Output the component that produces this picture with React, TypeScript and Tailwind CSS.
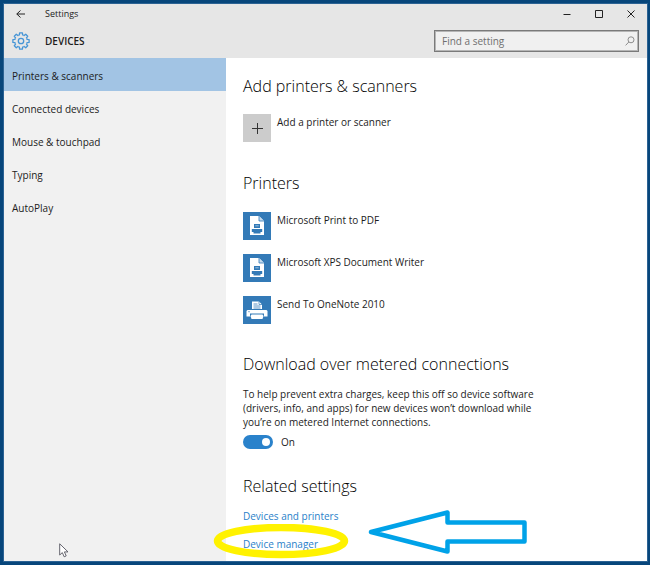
import { useState } from 'react'

const NAV_ITEMS = ['Printers & scanners', 'Connected devices', 'Mouse & touchpad', 'Typing', 'AutoPlay']

const PRINTERS = [
  { name: 'Microsoft Print to PDF', kind: 'document' },
  { name: 'Microsoft XPS Document Writer', kind: 'document' },
  { name: 'Send To OneNote 2010', kind: 'printer' },
]

function GearIcon() {
  const teeth = [0, 45, 90, 135, 180, 225, 270, 315]
  return (
    <svg viewBox="0 0 18 18" className="size-[18px]" fill="none" stroke="#4795d6" strokeWidth="1.3" strokeLinejoin="round" aria-hidden="true">
      <circle cx="9" cy="9" r="2.7" />
      {teeth.map((deg) => (
        <path
          key={deg}
          transform={`rotate(${deg} 9 9)`}
          d="M6.6 3.2 L7.4 2.9 L7.6 .9 H10.4 L10.6 2.9 L11.4 3.2"
        />
      ))}
    </svg>
  )
}

function DocumentPrinterIcon() {
  return (
    <svg viewBox="0 0 28 28" className="size-7" aria-hidden="true">
      <path d="M7 4 H16 L21 9 V23 H7 Z" fill="#fff" />
      <path d="M16 4 V9 H21" fill="#c4dbee" stroke="#337ab7" strokeWidth=".8" />
      <path d="M11 12 H17 V16 H11 Z" fill="#337ab7" />
      <path d="M12.3 13.8 H15.7" stroke="#b9d3ea" strokeWidth=".8" />
      <path d="M8.800 17 H19.200 V20 H8.800 Z" fill="#337ab7" />
      <path d="M10.500 19.500 H17.500 V21.500 H10.500 Z" fill="#337ab7" />
    </svg>
  )
}

function PrinterIcon() {
  return (
    <svg viewBox="0 0 28 28" className="size-7" aria-hidden="true">
      <path d="M9 5.5 H16 L19 8.5 V13 H9 Z" fill="#fff" />
      <path d="M16 5.5 V8.5 H19" fill="none" stroke="#337ab7" strokeWidth=".7" />
      <path d="M10.5 8 H14.5 M10.5 10 H17.5 M10.5 12 H17.5" stroke="#337ab7" strokeWidth=".8" />
      <path d="M4.5 14 H23.5 L24.5 15 V20.5 H3.5 V15 Z" fill="#fff" />
      <path d="M7 17.5 H21 V21 H7 Z" fill="#337ab7" />
      <path d="M8.5 18.5 H19.5 L20.5 20 L19.5 23 H8.5 L7.5 20 Z" fill="#fff" />
      <circle cx="6" cy="15.7" r=".6" fill="#337ab7" />
    </svg>
  )
}

function TitleBar() {
  return (
    <div className="flex h-5 items-center justify-between">
      <div className="flex items-center">
        <button aria-label="Back" className="ml-3 flex w-[29px] items-center">
          <svg viewBox="0 0 10 10" className="size-[10px]" fill="none" stroke="#222" strokeWidth="1">
            <path d="M9 5 H.8 M4.5 1.5 L.8 5 L4.5 8.5" />
          </svg>
        </button>
        <span className="text-[9px] leading-3">Settings</span>
      </div>
      <div className="flex">
        <button aria-label="Minimize" className="flex h-5 w-8 items-center justify-center">
          <svg viewBox="0 0 8 8" className="size-2" stroke="#222" strokeWidth="1"><path d="M.5 4.5 H7.5" /></svg>
        </button>
        <button aria-label="Maximize" className="flex h-5 w-8 items-center justify-center">
          <svg viewBox="0 0 8 8" className="size-2" fill="none" stroke="#222" strokeWidth="1"><path d="M.5 .5 H7.5 V7.5 H.5 Z" /></svg>
        </button>
        <button aria-label="Close" className="flex h-5 w-8 items-center justify-center">
          <svg viewBox="0 0 8 8" className="size-2" stroke="#222" strokeWidth="1"><path d="M.5 .5 L7.5 7.5 M7.5 .5 L.5 7.5" /></svg>
        </button>
      </div>
    </div>
  )
}

export default function App() {
  const [active, setActive] = useState(NAV_ITEMS[0])
  const [metered, setMetered] = useState(true)

  return (
    <div className="flex min-h-screen bg-[#07467b] pt-1 pr-[3px] pb-1 pl-1 font-['Open_Sans','Noto_Sans',sans-serif] text-[10px] text-[#1c1c1c]">
      <div className="relative flex flex-1 flex-col bg-white ring-1 ring-[#2b6293]">
        <header className="h-[54px] bg-[#e6e6e6]">
          <TitleBar />
          <div className="flex h-[34px] items-center px-2">
            <GearIcon />
            <h1 className="ml-[15px] flex-1 font-semibold">DEVICES</h1>
            <label className="flex h-[22px] w-[205px] items-center border border-[#7a7a7a] bg-[#f0f0f0] px-[7px] outline-1 -outline-offset-2 outline-[#b5b5b5]">
              <input
                type="text"
                aria-label="Find a setting"
                placeholder="Find a setting"
                className="min-w-0 flex-1 bg-transparent outline-none placeholder:text-[#6f6f6f]"
              />
              <svg viewBox="0 0 10 10" className="-mr-1 size-[10px]" fill="none" stroke="#8c8c8c" strokeWidth="1" aria-hidden="true">
                <circle cx="6" cy="3.8" r="3" />
                <path d="M3.8 6 L.6 9.4" />
              </svg>
            </label>
          </div>
        </header>

        <div className="flex flex-1">
          <nav className="w-[222px] shrink-0 bg-[#f1f1f1]">
            {NAV_ITEMS.map((item) => (
              <button
                key={item}
                onClick={() => setActive(item)}
                className={`block h-[33px] w-full px-2 pt-[3px] text-left ${item === active ? 'bg-[#a2c4e4]' : ''}`}
              >
                {item}
              </button>
            ))}
          </nav>

          <main className="min-w-0 flex-1 px-[17px] pt-4">
            <section>
              <h2 className="text-base leading-6 font-light text-black">Add printers &amp; scanners</h2>
              <button className="mt-4 flex items-start gap-[6px] text-left">
                <span className="flex size-7 items-center justify-center bg-[#cccccc]">
                  <svg viewBox="0 0 12 12" className="size-3" stroke="#333" strokeWidth="1"><path d="M6.5 1 V12 M1 6.5 H12" /></svg>
                </span>
                <span className="leading-4">Add a printer or scanner</span>
              </button>
            </section>

            <section className="mt-[29px]">
              <h2 className="text-base leading-6 font-light text-black">Printers</h2>
              <ul className="mt-[17px] flex flex-col gap-[14px]">
                {PRINTERS.map((printer) => (
                  <li key={printer.name} className="flex items-start gap-[6px]">
                    <span className="size-7 bg-[#337ab7]">
                      {printer.kind === 'document' ? <DocumentPrinterIcon /> : <PrinterIcon />}
                    </span>
                    <span className="leading-4">{printer.name}</span>
                  </li>
                ))}
              </ul>
            </section>

            <section className="mt-[28px]">
              <h2 className="text-base leading-6 font-light text-black">Download over metered connections</h2>
              <p className="mt-[11px] max-w-[300px] leading-[14px]">
                To help prevent extra charges, keep this off so device software (drivers, info, and apps) for new
                devices won’t download while you’re on metered Internet connections.
              </p>
              <label className="mt-[5px] flex h-4 items-center gap-2">
                <input
                  type="checkbox"
                  role="switch"
                  checked={metered}
                  onChange={(e) => setMetered(e.target.checked)}
                  className="flex h-[14px] w-[30px] appearance-none items-center rounded-full bg-[#8a8a8a] px-[3px] before:size-2 before:rounded-full before:bg-white checked:justify-end checked:bg-[#2a82cb]"
                />
                {metered ? 'On' : 'Off'}
              </label>
            </section>

            <section className="relative mt-6">
              <h2 className="text-base leading-6 font-light text-black">Related settings</h2>
              <div className="mt-[10px] flex flex-col items-start gap-3 leading-4 text-[#2a7fc9]">
                <a href="#devices-and-printers">Devices and printers</a>
                <a href="#device-manager" className="relative">
                  Device manager
                  <svg viewBox="0 0 136 36" className="pointer-events-none absolute -top-3 -left-[30px] h-9 w-[136px]" fill="none" aria-hidden="true">
                    <ellipse cx="68" cy="17" rx="63.5" ry="13.5" stroke="#fff200" strokeWidth="7.5" />
                  </svg>
                </a>
              </div>
              <svg viewBox="0 0 160 46" className="pointer-events-none absolute top-[35px] left-[125px] h-[46px] w-[160px]" fill="none" aria-hidden="true">
                <path d="M3 23 L79.5 3.5 V13.5 H156.5 V32.5 H79.5 V42.5 Z" stroke="#00a2e8" strokeWidth="4.5" strokeLinejoin="round" />
              </svg>
            </section>
          </main>
        </div>

        {/* Mouse pointer */}
        <svg viewBox="0 0 10 15" className="pointer-events-none absolute bottom-[3px] left-[55px] h-[15px] w-[10px]" aria-hidden="true">
          <path d="M.7 .8 V12 L3.3 9.6 L5.2 13.8 L7.2 12.9 L5.4 8.9 H9 Z" fill="#fff" stroke="#55555f" strokeWidth=".9" />
        </svg>
      </div>
    </div>
  )
}
